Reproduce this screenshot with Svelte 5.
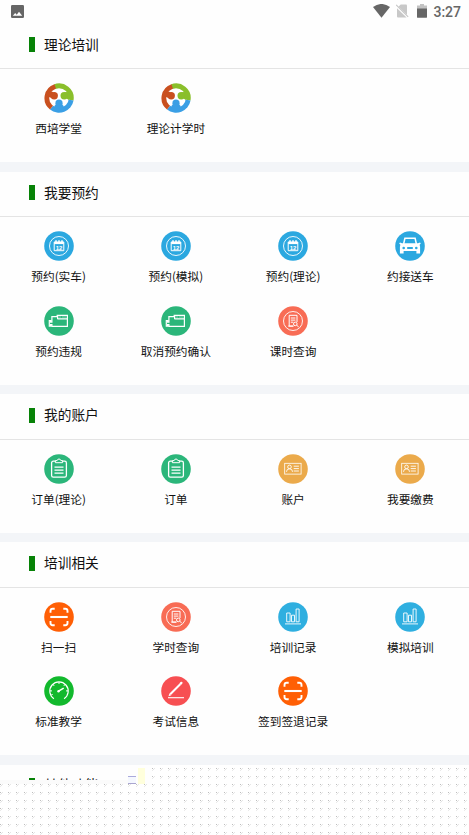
<script lang="ts">
	type Item = { label: string; icon: string; color: string }
	type Section = { title: string; items: Item[] }

	const blue = '#2ba8e0'
	const sky = '#2fafe0'
	const green = '#2bb67a'
	const coral = '#f86c55'
	const amber = '#ebaa4b'
	const orange = '#ff5f05'

	const sections: Section[] = [
		{
			title: '理论培训',
			items: [
				{ label: '西培学堂', icon: 'people', color: '#fff' },
				{ label: '理论计学时', icon: 'people', color: '#fff' }
			]
		},
		{
			title: '我要预约',
			items: [
				{ label: '预约(实车)', icon: 'calendar', color: blue },
				{ label: '预约(模拟)', icon: 'calendar', color: blue },
				{ label: '预约(理论)', icon: 'calendar', color: blue },
				{ label: '约接送车', icon: 'car', color: blue },
				{ label: '预约违规', icon: 'engine', color: green },
				{ label: '取消预约确认', icon: 'engine', color: green },
				{ label: '课时查询', icon: 'search', color: coral }
			]
		},
		{
			title: '我的账户',
			items: [
				{ label: '订单(理论)', icon: 'order', color: green },
				{ label: '订单', icon: 'order', color: green },
				{ label: '账户', icon: 'card', color: amber },
				{ label: '我要缴费', icon: 'card', color: amber }
			]
		},
		{
			title: '培训相关',
			items: [
				{ label: '扫一扫', icon: 'scan', color: orange },
				{ label: '学时查询', icon: 'search', color: coral },
				{ label: '培训记录', icon: 'chart', color: sky },
				{ label: '模拟培训', icon: 'chart', color: sky },
				{ label: '标准教学', icon: 'gauge', color: '#12b92d' },
				{ label: '考试信息', icon: 'pen', color: '#f74f52' },
				{ label: '签到签退记录', icon: 'scan', color: orange }
			]
		}
	]
</script>

{#snippet glyph(name: string)}
	{#if name === 'people'}
		<g stroke="none">
			<path d="M15 15 9.7 1.5A14.6 14.6 0 0 1 29.5 17.5Z" fill="#8abf2b" />
			<path d="M15 15 29.5 17.5A14.6 14.6 0 0 1 6 26.5Z" fill="#3a9fe5" />
			<path d="M15 15 6 26.5A14.6 14.6 0 0 1 10.5 1.2Z" fill="#c9501f" />
			<circle cx="15" cy="15" r="9.8" fill="#fff" />
			<path d="M5 10q3-3 5 0v6l-5-2Z" fill="#c9501f" />
			<path d="M25 10q-3-2-5 0v4l5 3Z" fill="#8abf2b" />
			<path d="M10 25q0-3 3-4h4q3 1 3 4Z" fill="#3a9fe5" />
			<circle cx="10.2" cy="12.7" r="3.7" fill="#c9501f" />
			<circle cx="20.2" cy="12.7" r="3.7" fill="#8abf2b" />
			<circle cx="15" cy="20.2" r="3.6" fill="#3a9fe5" />
		</g>
	{:else if name === 'calendar'}
		<circle cx="15" cy="15" r="9.5" stroke-width=".9" />
		<path d="M10.2 11h9.6v8.7h-9.6Z" />
		<path d="M10.2 12h9.6" stroke-width="2.2" />
		<path d="M12 9.3v2M15 9.3v2M18 9.3v2" stroke-width="1.5" />
		<text x="15" y="18.9">12</text>
	{:else if name === 'car'}
		<path d="M8.6 13 9.9 7.3h10.2L21.4 13" stroke-width="1.5" />
		<path fill-rule="evenodd" d="M7 12.3h16l2-.9.8 1-1.2 1.4.5 2v6.6h-3.7v-2.4H8.6v2.4H4.9v-6.6l.5-2-1.2-1.4.8-1ZM7.4 17a1.3 1.3 0 1 0 2.6 0 1.3 1.3 0 1 0-2.6 0M20 17a1.3 1.3 0 1 0 2.6 0 1.3 1.3 0 1 0-2.6 0M12.2 16v1.9h5.6V16Z" fill="#fff" stroke="none" />
	{:else if name === 'engine'}
		<path d="M7.9 10.7h5.3V9.3h10.2v11H7.9v-1.6H6.6v1.5H5.3v-5.6h1.3v1.5h1.3Z" stroke-width="1.2" />
		<path d="M13.4 12.9h10M13.6 10v3" stroke-width="1.2" />
		<path d="M14.5 11h2.6M18 11h4.4" stroke-width=".8" opacity=".5" />
	{:else if name === 'search'}
		<circle cx="15" cy="15" r="9.5" stroke-width=".9" />
		<path d="M19 16V9.3h-7.8v10.8h4.2M10.2 20.1h5.2M12.8 12h4.6M12.8 14.1h4.6M12.8 16.2h2.5" />
		<circle cx="17.3" cy="17.9" r="1.8" />
		<path d="m18.7 19.3 2 1.6" />
	{:else if name === 'order'}
		<rect x="7.6" y="7.2" width="14.8" height="16" rx="1.7" stroke-width="1.3" />
		<path d="M11.4 8.7V6.6h1.7q.4-1.6 1.9-1.6t1.9 1.6h1.7v2.1Z" fill="#2bb67a" />
		<path d="M10.5 13.2h9M10.5 16.2h9M10.5 19.2h9" stroke-width="1.2" />
	{:else if name === 'card'}
		<rect x="6.7" y="9.3" width="16.4" height="10.8" stroke-width=".8" />
		<circle cx="11.5" cy="12.9" r="1.8" stroke-width=".9" />
		<path d="M8.5 17.8q0-3 3-3t3 3M15.7 12.2h5.2M15.7 14.6h5.2M15.7 17h5.2" stroke-width=".9" />
	{:else if name === 'scan'}
		<path d="M6.5 10.8V9q0-2.2 2.2-2.2h2M19.3 6.8h2q2.2 0 2.2 2.2v1.8M6.5 19v2q0 2.2 2.2 2.2h2M19.3 23.2h2q2.2 0 2.2-2.2v-2" stroke-width="1.9" />
		<path d="M6.3 15h17.4" stroke-width="2.1" />
	{:else if name === 'chart'}
		<path d="M7 21.9h16M8.7 19.8V11h3.4v8.8ZM13.5 19.8v-6.6h3v6.6ZM18.1 19.8V7h3v12.8Z" stroke-width=".9" />
	{:else if name === 'gauge'}
		<path d="M9.9 22.7A9.2 9.2 0 1 1 20.1 22.7" stroke-width="1.2" />
		<path d="M15 6v2M9 8.5l1.2 1.4M21 8.5l-1.2 1.4M6 14.9h2M22 14.9h2M7.2 19l1.5-.6" />
		<path d="m14.5 15.2 5.2-3" stroke-width="1.5" />
		<circle cx="14.5" cy="15.2" r="1.2" fill="#fff" stroke="none" />
	{:else if name === 'pen'}
		<path d="m9.2 18.3 10-10.1" stroke-width="2" />
		<path d="m19.7 7.6.7-.7" stroke-width="2.3" stroke-linecap="round" />
		<path d="m7.5 20.3 1-2.8 1.8 1.7Z" fill="#fff" stroke="none" />
		<path d="M7 21.7h16" stroke-width="1.1" />
	{/if}
{/snippet}

<main>
	<div class="status">
		<svg class="photo" width="13" height="13" viewBox="0 0 13 13">
			<rect width="13" height="13" rx="1.3" fill="#666" />
			<path d="M1.8 10.7 4.2 7.9l1.5 1.8 2.3-3 3.2 4Z" fill="#fff" />
		</svg>
		<div class="system">
			<svg width="17" height="14" viewBox="0 0 17 14"><path d="M0 3.1Q8.5-3.2 17 3.1L8.5 13.7Z" fill="#666" /></svg>
			<svg class="sim" width="13" height="14" viewBox="0 0 13 14">
				<path d="M4.7.5H10q1 0 1 1v11q0 1-1 1H2q-1 0-1-1V4.2Z" fill="#c8c8c8" />
				<path d="m-.5 1.2 12.7 12.4" stroke="#fff" stroke-width="2.2" />
				<path d="m.2.8 12 12" stroke="#c5c5c5" stroke-width="1.1" />
			</svg>
			<svg class="battery" width="10" height="14" viewBox="0 0 10 14">
				<path d="M0 1.4h3V0h4v1.4h3V5H0Z" fill="#c2c2c2" />
				<path d="M0 4.5h10v8.4q0 .9-.9.9H.9q-.9 0-.9-.9Z" fill="#666" />
			</svg>
			<span>3:27</span>
		</div>
	</div>

	{#each sections as s}
		<section>
			<h2>{s.title}</h2>
			<div class="grid">
				{#each s.items as item}
					<div class="item">
						<svg class="icon" viewBox="0 0 30 30" fill="none" stroke="#fff" stroke-width="1">
							<circle cx="15" cy="15" r="14.8" fill={item.color} stroke="none" />
							{@render glyph(item.icon)}
						</svg>
						<span>{item.label}</span>
					</div>
				{/each}
			</div>
		</section>
	{/each}

	<div class="tail">
		<div class="peek"><h2>其他功能</h2></div>
		<div class="scraps"><i class="lines"></i><i class="yellow"></i></div>
	</div>
</main>

<style>
	:global(body) { background: #fff; }

	main {
		width: 469px; height: 835px; overflow: hidden; display: flex; flex-direction: column;
		font-family: "Noto Sans CJK SC", sans-serif; color: #111; background: #f3f5f8;
	}

	.status {
		height: 23.6px; flex: none; box-sizing: border-box; padding: 5px 8px 0 11px;
		display: flex; justify-content: space-between; align-items: flex-start; background: #fefefe;
	}
	.system { display: flex; align-items: flex-start; margin-top: -1px; }
	.sim { margin-left: 6px; }
	.battery { margin-left: 8px; }
	.system span { margin-left: 6px; font: 500 14px/16px Roboto, sans-serif; color: #666; }

	section { flex: none; margin-bottom: 9.5px; padding-bottom: 19.1px; background: #fefefe; }

	h2 {
		display: flex; align-items: center; height: 45.4px; box-sizing: border-box; margin: 0;
		padding: 0 0 4px 29px; border-bottom: 1px solid #e4e4e4;
		font-size: 13.7px; font-weight: 400; line-height: 20px;
	}
	h2::before { content: ''; width: 5.5px; height: 15px; margin: 2px 9.5px 0 0; background: #078207; }

	.grid { display: grid; grid-template-columns: repeat(4, 1fr); grid-auto-rows: 74.2px; }
	.item { display: flex; flex-direction: column; align-items: center; padding-top: 14.3px; }
	.icon { display: block; width: 30px; height: 30px; flex: none; }
	.icon text { font: 700 6px "Liberation Sans", sans-serif; fill: #fff; stroke: none; text-anchor: middle; }
	.item span { margin-top: 6px; font-size: 11.7px; line-height: 18px; white-space: nowrap; }

	/* checker texture that shows where the list has not been painted yet */
	.tail {
		flex: 1; display: flex; align-items: flex-start;
		background:
			conic-gradient(from 0deg at 1px 1px, transparent 75%, #bdbdbd 0) 0 3px / 8px 8px,
			conic-gradient(from 0deg at 1px 1px, transparent 75%, #e6e6e6 0) 2px 3px / 8px 8px,
			conic-gradient(from 0deg at 1px 1px, transparent 75%, #e3e3e3 0) 1px 4px / 8px 8px,
			conic-gradient(from 0deg at 1px 1px, transparent 75%, #e9e9e9 0) 0 5px / 8px 8px,
			#fff;
	}
	.peek { width: 128px; height: 15px; overflow: hidden; background: #fefefe; border-bottom: 4px solid #fbfbfb; }
	.peek h2 { height: 44px; }
	.scraps { display: flex; width: 24px; height: 19px; background: #fefefe; }
	.lines {
		width: 8px; height: 8px; margin-top: 11px; box-sizing: border-box;
		border-top: 1px solid #aaaadc; border-bottom: 1px solid #aaa6d0; background: #f5f8ff;
	}
	.yellow { width: 7px; height: 16px; margin: 3px 0 0 2px; background: #ffffdc; }
</style>
